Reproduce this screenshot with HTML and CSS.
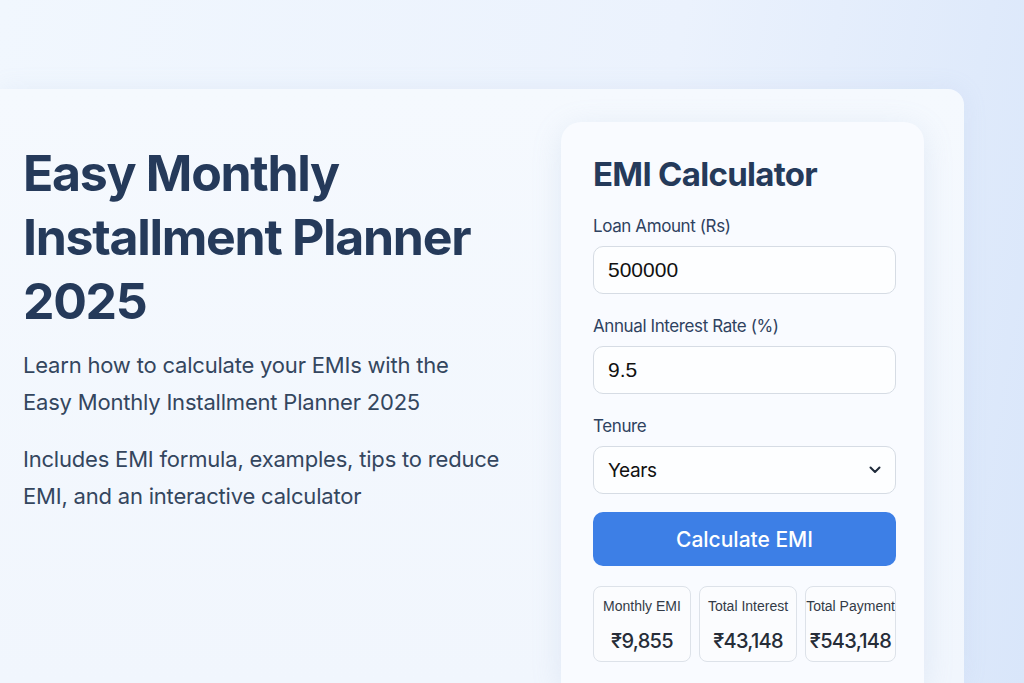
FILE: index.html
```html
<!DOCTYPE html>
<html lang="en">
<head>
<meta charset="utf-8">
<title>Easy Monthly Installment Planner 2025</title>
<link rel="stylesheet" href="styles.css">
</head>
<body>
<main class="panel">
  <section class="intro">
    <h1 class="title">Easy Monthly Installment Planner 2025</h1>
    <p class="lead">Learn how to calculate your EMIs with the Easy Monthly Installment Planner 2025</p>
    <p class="lead">Includes EMI formula, examples, tips to reduce EMI, and an interactive calculator</p>
  </section>
  <section class="card">
    <h2 class="card-title">EMI Calculator</h2>
    <label class="label">Loan Amount (Rs)</label>
    <div class="field"><span class="field-value">500000</span></div>
    <label class="label">Annual Interest Rate (%)</label>
    <div class="field"><span class="field-value">9.5</span></div>
    <label class="label">Tenure</label>
    <div class="field select"><span class="select-value">Years</span>
      <svg class="chev" width="12" height="8" viewBox="0 0 12 8"><path d="M1.5 1.5 L6 6 L10.5 1.5" fill="none" stroke="#1f2a3a" stroke-width="2" stroke-linecap="round" stroke-linejoin="round"/></svg>
    </div>
    <button class="btn">Calculate EMI</button>
    <div class="results">
      <div class="result"><div class="r-label">Monthly EMI</div><div class="r-value">₹9,855</div></div>
      <div class="result"><div class="r-label">Total Interest</div><div class="r-value">₹43,148</div></div>
      <div class="result"><div class="r-label">Total Payment</div><div class="r-value">₹543,148</div></div>
    </div>
  </section>
</main>
</body>
</html>
```
FILE: styles.css
```css
html, body {
  margin: 0;
  height: 100%;
}
body {
  background: linear-gradient(100deg, #f1f7fe 0%, #ebf2fd 60%, #d9e6fa 100%);
  font-family: Inter, "Noto Sans", sans-serif;
  overflow: hidden;
  padding-top: 89px;
  box-sizing: border-box;
}
.panel {
  width: 964px;
  height: 594px;
  box-sizing: border-box;
  background: linear-gradient(180deg, #f5f9fe 0%, #f1f6fd 100%);
  border-radius: 0 16px 0 0;
  display: flex;
  padding-top: 33px;
  box-shadow: 0 0 24px rgba(150, 175, 215, 0.12);
}
.intro {
  width: 538px;
  padding-left: 23px;
  padding-top: 19px;
}
.title {
  margin: 0 0 14px;
  font-size: 50px;
  line-height: 64px;
  font-weight: 700;
  color: #253a5a;
  letter-spacing: -1.3px;
  width: 470px;
}
.lead {
  margin: 0 0 20px;
  font-size: 22px;
  line-height: 37px;
  color: #34465e;
  letter-spacing: -0.2px;
  width: 478px;
}
.card {
  width: 363px;
  box-sizing: border-box;
  background: #f9fbff;
  border-radius: 20px 20px 0 0;
  padding: 31px 28px 0 32px;
  box-shadow: 0 6px 30px rgba(140, 165, 205, 0.18);
  display: flex;
  flex-direction: column;
}
.card-title {
  margin: 0 0 19px;
  font-size: 33px;
  line-height: 42px;
  font-weight: 700;
  color: #253a5a;
  letter-spacing: -0.7px;
}
.label {
  font-size: 17px;
  line-height: 24px;
  color: #2f4260;
  letter-spacing: -0.4px;
  margin-bottom: 8px;
}
.field {
  height: 48px;
  box-sizing: border-box;
  border: 1px solid #d6dce4;
  border-radius: 10px;
  background: #fdfeff;
  display: flex;
  align-items: center;
  padding: 0 14px;
  margin-bottom: 20px;
}
.field-value {
  font-family: "Liberation Sans", Arial, sans-serif;
  font-size: 21px;
  color: #111;
}
.select {
  justify-content: space-between;
  padding-right: 14px;
}
.select-value {
  font-size: 19px;
  letter-spacing: -0.4px;
  color: #111;
}
.chev {
  display: block;
}
.btn {
  height: 54px;
  border: none;
  border-radius: 10px;
  background: #3d7fe6;
  color: #fff;
  font-family: Inter, sans-serif;
  font-size: 21px;
  font-weight: 500;
  margin-top: -2px;
  margin-bottom: 20px;
  padding: 0;
}
.results {
  display: grid;
  grid-template-columns: 98px 98px 1fr;
  gap: 8px;
}
.result {
  height: 76px;
  box-sizing: border-box;
  border: 1px solid #dde2e9;
  border-radius: 8px;
  background: #fbfcfe;
  display: flex;
  flex-direction: column;
  align-items: center;
  padding-top: 9px;
  overflow: hidden;
}
.r-label {
  font-family: "Liberation Sans", Arial, sans-serif;
  font-size: 14px;
  line-height: 20px;
  color: #333b47;
  white-space: nowrap;
}
.r-value {
  margin-top: 12px;
  font-size: 20px;
  line-height: 26px;
  font-weight: 500;
  letter-spacing: -0.7px;
  color: #262d38;
  white-space: nowrap;
}
```
